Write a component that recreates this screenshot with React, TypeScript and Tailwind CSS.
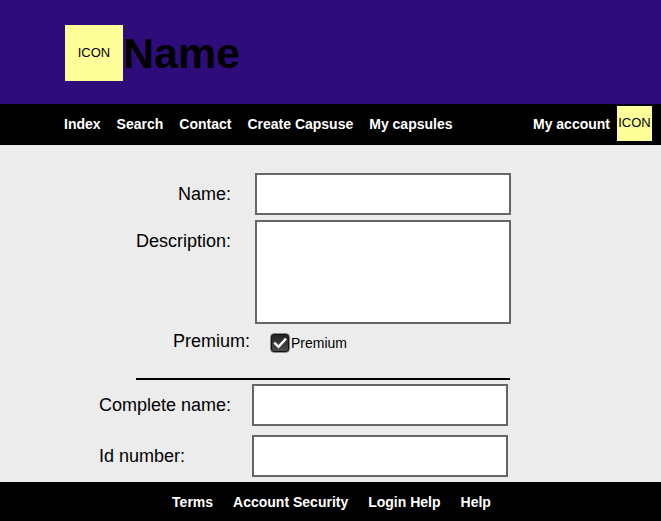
import { useState } from "react";

const navLinks = ["Index", "Search", "Contact", "Create Capsuse", "My capsules"];
const footerLinks = ["Terms", "Account Security", "Login Help", "Help"];

const labelClass = "w-[132px] shrink-0 pt-[7px] text-lg whitespace-nowrap";
const fieldClass =
  "block min-w-0 flex-1 border-2 border-[#666666] bg-white px-2 text-lg outline-none";

function Header() {
  return (
    <header className="flex items-center bg-[#2e0d7a] px-[65px] pt-[25px] pb-[23px]">
      <div className="flex h-14 w-[58px] shrink-0 items-center justify-center bg-[#ffff99] text-[13px]">
        ICON
      </div>
      <h1 className="text-[43px] leading-14 font-bold">Name</h1>
    </header>
  );
}

function NavBar() {
  return (
    <nav className="flex items-center justify-between bg-black pt-[2px] pr-[9px] pb-1 pl-16 text-sm font-bold text-white">
      <div className="flex gap-4">
        {navLinks.map((label) => (
          <a key={label} href="#" className="whitespace-nowrap">
            {label}
          </a>
        ))}
      </div>
      <a href="#" className="flex items-center gap-[7px] whitespace-nowrap">
        My account
        <span className="flex h-[35px] w-[35px] items-center justify-center bg-[#ffff99] text-[13px] font-normal text-black">
          ICON
        </span>
      </a>
    </nav>
  );
}

function PremiumBox() {
  const [checked, setChecked] = useState(true);
  return (
    <div className="flex items-center gap-px">
      <span className="relative h-5 w-5">
        <input
          id="premium"
          type="checkbox"
          checked={checked}
          onChange={(e) => setChecked(e.target.checked)}
          className="block h-5 w-5 appearance-none rounded border border-[#8a8a8a] bg-linear-to-b from-[#202020] to-[#505050] shadow-[inset_0_0_0_1px_#111111]"
        />
        {checked && (
          <svg viewBox="0 0 20 20" className="pointer-events-none absolute inset-0 h-5 w-5" fill="none" stroke="white" strokeWidth="2.4">
            <path d="M4.3 9.6 8.5 13.8 16 5.6" />
          </svg>
        )}
      </span>
      <label htmlFor="premium" className="text-sm">
        Premium
      </label>
    </div>
  );
}

export default function App() {
  return (
    <div className="flex min-h-screen flex-col bg-[#ececec] font-['Liberation_Sans',Arial,sans-serif] text-black">
      <Header />
      <NavBar />
      <main className="flex-1 pt-7 pr-[150px] pb-[5px] pl-[99px]">
        <form>
          <div className="flex gap-6">
            <label htmlFor="name" className={`${labelClass} text-right`}>
              Name:
            </label>
            <input id="name" type="text" className={`${fieldClass} h-[42px]`} />
          </div>
          <div className="mt-[5px] flex gap-6">
            <label htmlFor="description" className={`${labelClass} text-right`}>
              Description:
            </label>
            <textarea id="description" className={`${fieldClass} h-[104px] resize-none`} />
          </div>
          <div className="mt-[3px] flex gap-5">
            <span className="w-[151px] text-right text-lg">Premium:</span>
            <div className="pt-[6px]">
              <PremiumBox />
            </div>
          </div>
          <hr className="mt-[23px] mr-px ml-[37px] border-t-2 border-black" />
          <div className="mt-1 mr-[3px] flex gap-[21px]">
            <label htmlFor="complete-name" className={labelClass}>
              Complete name:
            </label>
            <input id="complete-name" type="text" className={`${fieldClass} h-[42px]`} />
          </div>
          <div className="mt-[9px] mr-[3px] flex gap-[21px]">
            <label htmlFor="id-number" className={labelClass}>
              Id number:
            </label>
            <input id="id-number" type="text" className={`${fieldClass} h-[42px]`} />
          </div>
        </form>
      </main>
      <footer className="flex min-h-[39px] items-center justify-center gap-5 bg-black pl-[2px] text-sm font-bold text-white">
        {footerLinks.map((label) => (
          <a key={label} href="#" className="whitespace-nowrap">
            {label}
          </a>
        ))}
      </footer>
    </div>
  );
}
